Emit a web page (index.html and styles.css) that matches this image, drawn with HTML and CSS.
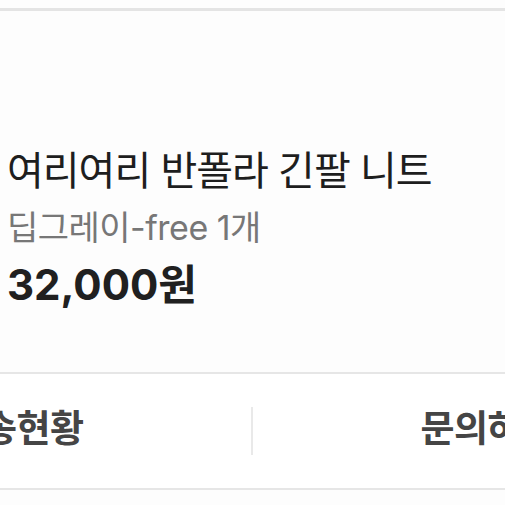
FILE: index.html
```html
<!DOCTYPE html>
<html lang="ko">
<head>
<meta charset="UTF-8" />
<meta name="viewport" content="width=device-width, initial-scale=1.0">
<title>주문 상품</title>
<link rel="stylesheet" href="styles.css">
</head>
<body>

<div class="top-line"></div>

<!-- 주문 상품 정보 -->
<section class="product">
  <h1 class="product-name">여리여리 반폴라 긴팔 니트</h1>
  <p class="product-option">딥그레이-free 1개</p>
  <p class="product-price">32,000원</p>
</section>

<!-- 하단 버튼 -->
<div class="actions">
  <button class="action">배송현황</button>
  <span class="divider"></span>
  <button class="action">문의하기</button>
</div>

</body>
</html>
```

FILE: styles.css
```css
/* Base styles */
html, body {
  overflow: hidden;
}

body {
  font-family: 'Inter', 'Noto Sans CJK KR', sans-serif;
  margin: 0;
  padding: 0;
  background: #fdfdfd;
  color: #222;
  width: 505px;
}

.top-line {
  margin-top: 8px;
  height: 3px;
  background: #e4e4e4;
}

/* Product info */
.product {
  padding: 132px 0 0 7px;
}

.product-name {
  margin: 0;
  font-size: 40px;
  font-weight: 400;
  line-height: 56px;
  letter-spacing: -1px;
  color: #1e1e1e;
}

.product-option {
  margin: 0;
  font-size: 34px;
  line-height: 58px;
  letter-spacing: -0.5px;
  color: #777;
}

.product-price {
  margin: 0;
  font-size: 42px;
  font-weight: 700;
  line-height: 56px;
  color: #202020;
}

/* Bottom actions */
.actions {
  display: grid;
  grid-template-columns: 1fr 2px 1fr;
  align-items: center;
  width: 940px;
  margin: 59px 0 0 -218px;
  height: 114px;
  border-top: 2px solid #e6e6e6;
  border-bottom: 2px solid #e6e6e6;
  background: #fff;
}

.action {
  background: none;
  border: none;
  font-family: inherit;
  font-size: 37px;
  font-weight: 700;
  color: #454545;
  letter-spacing: -0.5px;
  padding: 0 0 10px;
}

.divider {
  height: 48px;
  background: #e9e9e9;
}
```
